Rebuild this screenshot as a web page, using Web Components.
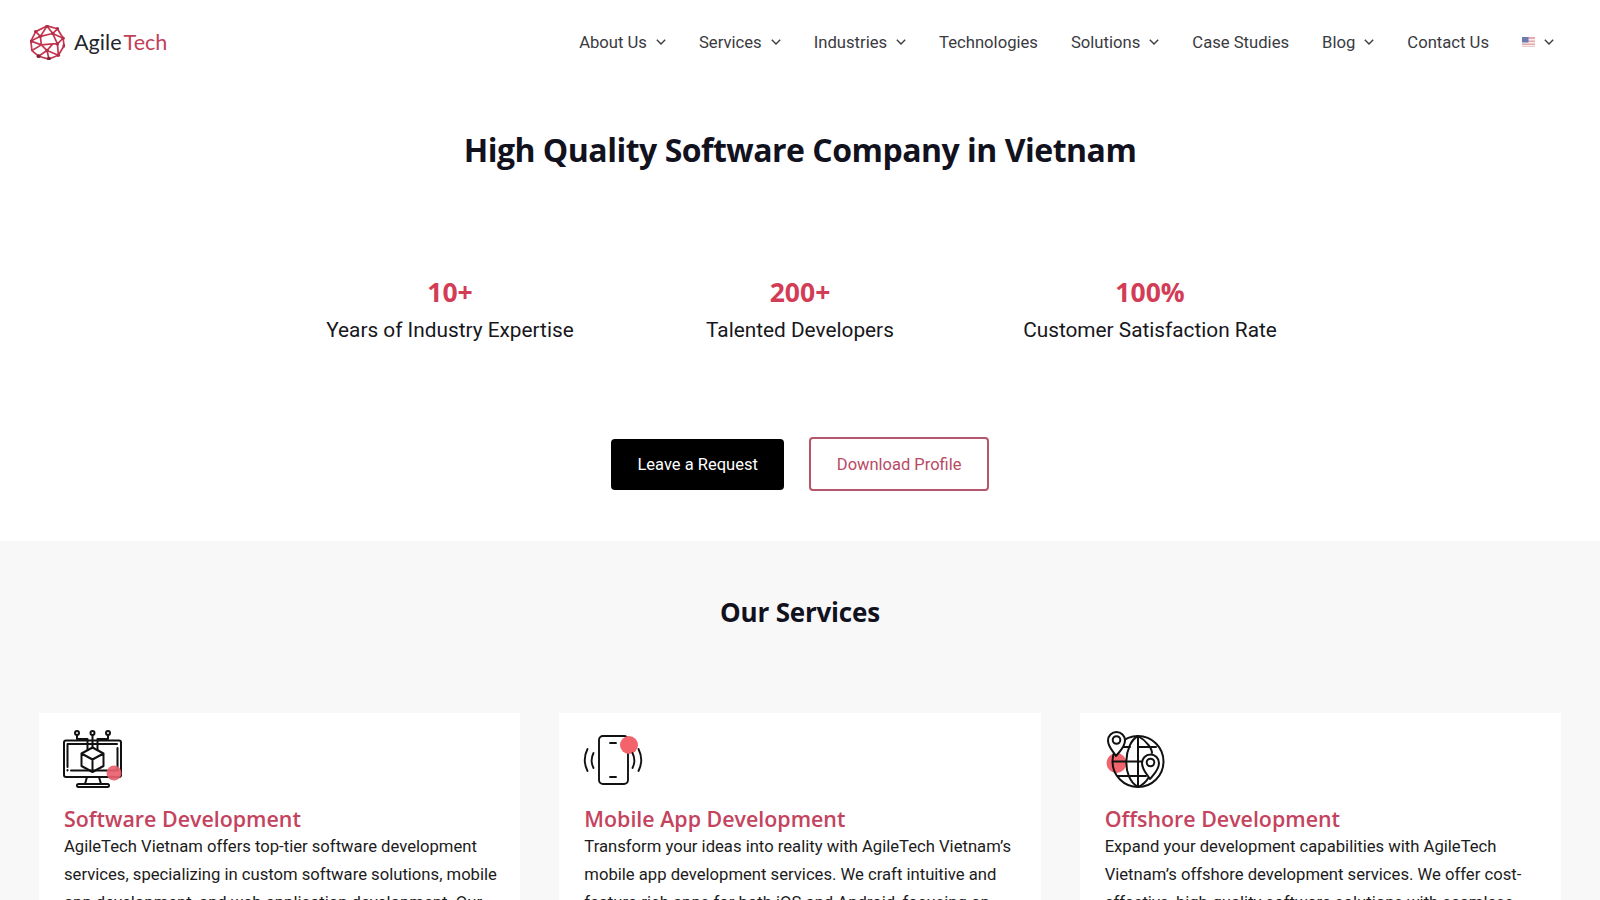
<!DOCTYPE html>
<html lang="en">
<head>
<meta charset="utf-8">
<title>AgileTech</title>
<style>
  html, body { margin: 0; height: 900px; overflow: hidden; background: #fff; }
  body { font-family: Roboto, "Liberation Sans", sans-serif; }
</style>
</head>
<body>
<site-header>
  <nav-item caret>About Us</nav-item>
  <nav-item caret>Services</nav-item>
  <nav-item caret>Industries</nav-item>
  <nav-item>Technologies</nav-item>
  <nav-item caret>Solutions</nav-item>
  <nav-item>Case Studies</nav-item>
  <nav-item caret>Blog</nav-item>
  <nav-item>Contact Us</nav-item>
  <nav-item caret>
    <svg width="13" height="10" viewBox="0 0 14 10" preserveAspectRatio="none" style="display:block">
      <rect width="14" height="10" fill="#e5a9ae"/>
      <rect y="2" width="14" height="1.5" fill="#f5eeee"/>
      <rect y="5" width="14" height="1.5" fill="#f5eeee"/>
      <rect y="8" width="14" height="1.5" fill="#f5eeee"/>
      <rect width="7" height="5.5" fill="#6d7bb0"/>
    </svg>
  </nav-item>
</site-header>

<hero-section>
  <stat-item value="10+">Years of Industry Expertise</stat-item>
  <stat-item value="200+">Talented Developers</stat-item>
  <stat-item value="100%">Customer Satisfaction Rate</stat-item>
  <action-button slot="actions" variant="solid">Leave a Request</action-button>
  <action-button slot="actions" variant="outline">Download Profile</action-button>
</hero-section>

<services-section>
  <service-card title="Software Development">
    <svg slot="icon" width="60" height="60" viewBox="1 0 60 60" overflow="visible" fill="none" stroke="#111" stroke-width="2" stroke-linecap="round" stroke-linejoin="round">
      <rect x="1" y="10.500" width="57" height="36.500" rx="2"/>
      <path d="M4.500 37V14H54M54.500 18V40.500H8M4.500 40.500V40"/>
      <path d="M24 47l-2 7M36 47l2 7"/>
      <rect x="14" y="54" width="32" height="3" rx="1.500"/>
      <path d="M29.500 17.500l11 6v12.500l-11 6-11-6V23.500zM18.500 23.500l11 6 11-6M29.500 29.500v12.500"/>
      <circle cx="14" cy="3" r="2"/><circle cx="29.500" cy="3" r="2"/><circle cx="45" cy="3" r="2"/>
      <path d="M14 5V9H24.500V20M29.500 5V17M45 5V9H34.500V20"/>
      <circle cx="51" cy="43" r="7.500" fill="#e8606c" fill-opacity=".92" stroke="none"/>
    </svg>
    AgileTech Vietnam offers top-tier software development services, specializing in custom software solutions, mobile app development, and web application development. Our
  </service-card>
  <service-card title="Mobile App Development">
    <svg slot="icon" width="60" height="60" viewBox="0 -1 60 60" overflow="visible" fill="none" stroke="#111" stroke-width="1.9" stroke-linecap="round" stroke-linejoin="round">
      <rect x="15" y="5" width="29" height="48" rx="4"/>
      <circle cx="45" cy="14" r="9" fill="#f2636b" stroke="none"/>
      <path d="M26 12h6M26 46h6"/>
      <path d="M3.500 18c-3.500 7-3.500 15 0 22M9.500 22c-2.500 5-2.500 10 0 15M48.500 22c2.500 5 2.500 10 0 15M54.500 18c3.500 7 3.500 15 0 22"/>
    </svg>
    Transform your ideas into reality with AgileTech Vietnam’s mobile app development services. We craft intuitive and feature-rich apps for both iOS and Android, focusing on
  </service-card>
  <service-card title="Offshore Development">
    <svg slot="icon" width="60" height="60" viewBox="-1 2 60 60" overflow="visible" fill="none" stroke="#111" stroke-width="2" stroke-linecap="round" stroke-linejoin="round">
      <circle cx="10.500" cy="35" r="10" fill="#f0656d" stroke="none"/>
      <circle cx="32" cy="33.500" r="25.500"/>
      <path d="M32 8V59M32 8C18 15 15 50 32 59M32 8C41 13 46 21 46 25M32 59C37 57 40 54 43 49"/>
      <path d="M7 33.500H36M12 19H24M32 19H50M12 48H40"/>
      <path d="M10 28c-3-5-8-9-8-15.500a8.500 8.500 0 0 1 17 0c0 6.500-5 10.500-9 15.500z" fill="#fff"/>
      <circle cx="10.500" cy="12" r="3.800"/>
      <path d="M44 51c-3-5-8-9-8-16a8.500 8.500 0 0 1 17 0c0 7-5 11-9 16z" fill="#fff"/>
      <circle cx="44.500" cy="34.500" r="3.800"/>
    </svg>
    Expand your development capabilities with AgileTech Vietnam’s offshore development services. We offer cost-effective, high-quality software solutions with seamless
  </service-card>
</services-section>

<script>
// small helper so every element gets the same shadow setup
function shadow(el, html) {
  el.attachShadow({ mode: 'open' }).innerHTML = html;
}

class SiteHeader extends HTMLElement {
  constructor() {
    super();
    shadow(this, `
      <style>
        :host { display: flex; align-items: center; justify-content: space-between; height: 84px; padding: 0 46px 0 30px; }
        .logo { display: flex; align-items: center; gap: 9px; font: 400 21.600px Lato, sans-serif; color: #26262b; }
        .logo b { font-weight: 400; color: #c23f58; margin-left: 2px; }
        svg { display: block; }
        nav { display: flex; align-items: center; gap: 33px; }
      </style>
      <div class="logo">
        <svg width="35" height="35" viewBox="0 0 37 37" fill="none" stroke="#c2364f" stroke-width="1.800" stroke-linejoin="round">
          <path d="M18 1L29 4 35 14 36 22 30 32 20 36 9 33 2 27 1 17 6 7z"/>
          <path d="M18 1L11 12 24 9 29 4M18 1L24 9 29 20 35 14M24 9L35 14M11 12L6 7M11 12L1 17 12 21 2 27M11 12L12 21 24 20 29 20 30 32M12 21L18 27 9 33M18 27L20 36M18 27L30 32M18 27L24 20"/>
          <g fill="#b22f4a" stroke="none">
            <circle cx="18" cy="1.500" r="1.800"/><circle cx="29" cy="4" r="1.800"/><circle cx="35" cy="14" r="1.800"/><circle cx="36" cy="22" r="1.800"/>
            <circle cx="1.500" cy="17" r="1.800"/><circle cx="6" cy="7" r="1.800"/><circle cx="11" cy="12" r="1.800"/><circle cx="24" cy="9" r="1.800"/>
            <circle cx="29" cy="20" r="1.800"/><circle cx="18" cy="27" r="1.800"/><circle cx="30" cy="32" r="1.800"/>
          </g>
          <g fill="#7c2138" stroke="none"><circle cx="9" cy="33" r="2"/><circle cx="20" cy="35.500" r="2"/></g>
        </svg>
        <span>Agile<b>Tech</b></span>
      </div>
      <nav><slot></slot></nav>
    `);
  }
}

class NavItem extends HTMLElement {
  constructor() {
    super();
    const caret = this.hasAttribute('caret')
      ? '<svg width="10" height="6" viewBox="0 0 10 6" fill="none" stroke="#3b3b40" stroke-width="1.400"><path d="M.8.800L5 5l4.200-4.200"/></svg>'
      : '';
    shadow(this, `
      <style>
        :host { display: flex; align-items: center; gap: 9px; font: 400 16.650px Roboto, sans-serif; color: #3a3a3f; white-space: nowrap; }
        svg { display: block; }
      </style>
      <slot></slot>${caret}
    `);
  }
}

class HeroSection extends HTMLElement {
  constructor() {
    super();
    shadow(this, `
      <style>
        :host { display: block; height: 457px; text-align: center; }
        h1 { margin: 0; padding-top: 42px; font: 700 32px/48px "Open Sans", sans-serif; letter-spacing: -.5px; color: #12121f; }
        .stats { display: grid; grid-template-columns: repeat(3, 350px); justify-content: center; margin-top: 99px; }
        .actions { display: flex; justify-content: center; align-items: center; gap: 25px; margin-top: 88px; }
      </style>
      <h1>High Quality Software Company in Vietnam</h1>
      <div class="stats"><slot></slot></div>
      <div class="actions"><slot name="actions"></slot></div>
    `);
  }
}

class StatItem extends HTMLElement {
  constructor() {
    super();
    shadow(this, `
      <style>
        :host { display: block; text-align: center; }
        .value { font: 700 26.500px/38px "Open Sans", sans-serif; color: #d23c55; }
        .label { font: 400 20.800px/38px Roboto, sans-serif; color: #17171c; }
      </style>
      <div class="value">${this.getAttribute('value')}</div>
      <div class="label"><slot></slot></div>
    `);
  }
}

class ActionButton extends HTMLElement {
  constructor() {
    super();
    shadow(this, `
      <style>
        :host { display: block; box-sizing: border-box; border-radius: 4px; font: 400 16.500px/19px Roboto, sans-serif; padding: 16px 26.500px; }
        :host([variant=solid]) { background: #000; color: #fff; }
        :host([variant=outline]) { background: #fff; color: #b94a64; border: 2px solid #b5566c; padding: 15.500px 25.500px; }
      </style>
      <slot></slot>
    `);
  }
}

class ServicesSection extends HTMLElement {
  constructor() {
    super();
    shadow(this, `
      <style>
        :host { display: block; height: 359px; background: #f8f8f8; overflow: hidden; }
        h2 { margin: 0; padding-top: 51px; text-align: center; font: 700 26px/40px "Open Sans", sans-serif; letter-spacing: -.2px; color: #12121f; }
        .grid { display: grid; grid-template-columns: repeat(3, 1fr); gap: 39px; padding: 0 39px; margin-top: 81px; }
      </style>
      <h2>Our Services</h2>
      <div class="grid"><slot></slot></div>
    `);
  }
}

class ServiceCard extends HTMLElement {
  constructor() {
    super();
    shadow(this, `
      <style>
        :host { display: block; background: #fff; padding: 17px 20px 24px 25px; height: 300px; box-sizing: border-box; }
        .icon { height: 60px; }
        h3 { margin: 15px 0 0; font: 600 21.400px/28px "Open Sans", sans-serif; color: #c4435e; }
        p { margin: 0; font: 400 16.650px/28px Roboto, sans-serif; color: #1b1b20; }
        svg { display: block; }
      </style>
      <div class="icon"><slot name="icon"></slot></div>
      <h3>${this.getAttribute('title')}</h3>
      <p><slot></slot></p>
    `);
  }
}

customElements.define('site-header', SiteHeader);
customElements.define('nav-item', NavItem);
customElements.define('hero-section', HeroSection);
customElements.define('stat-item', StatItem);
customElements.define('action-button', ActionButton);
customElements.define('services-section', ServicesSection);
customElements.define('service-card', ServiceCard);
</script>
</body>
</html>
